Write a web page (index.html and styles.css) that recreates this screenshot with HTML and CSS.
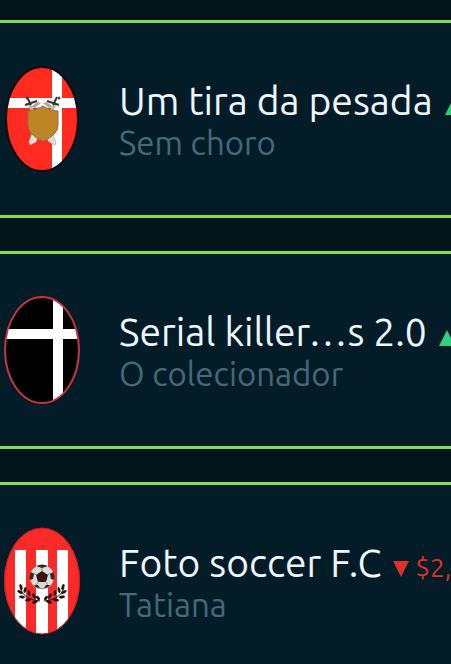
FILE: index.html
```
<!DOCTYPE html>
<html lang="pt-BR">
<head>
<meta charset="utf-8">
<meta name="viewport" content="width=device-width, initial-scale=1">
<title>Times</title>
<link rel="stylesheet" href="styles.css">
</head>
<body>
<main class="teams">
  <article class="team">
    <svg class="crest" viewBox="0 0 78 108" aria-hidden="true">
      <clipPath id="c1"><ellipse cx="39" cy="54" rx="36" ry="52"/></clipPath>
      <g clip-path="url(#c1)">
        <path fill="#ff2a20" d="M0 0h78v108H0z"/>
        <path fill="#fff" d="M0 33h78v10H0zM49 0h10v108H49z"/>
      </g>
      <ellipse cx="39" cy="54" rx="36" ry="52" fill="none" stroke="#100c10" stroke-width="2"/>
      <path d="M25 38L47 75M53 38L31 75" stroke="#b9b9b5" stroke-width="3"/>
      <path d="M43 72l6-4 4 9-1 3-6-3zM35 72l-6-4-3 9 1 3 6-3z" fill="#dededa" stroke="#a8a8a0" stroke-width=".6"/>
      <path d="M24 32l4 8M22 40l12-4M54 32l-4 8M56 40l-12-4" stroke="#34363a" stroke-width="2"/>
      <path d="M28 42l6-5 4 1-6 5zM50 42l-6-5-4 1 6 5z" fill="#aaa9a8"/>
      <circle cx="24" cy="33" r="1.5" fill="#44484c"/><circle cx="56" cy="33" r="1.5" fill="#44484c"/>
      <path d="M25 46q7 0 15-5 7 5 15 5v14q0 10-15 16-15-6-15-16z" fill="#bd8526" stroke="#94733a"/>
    </svg>
    <div class="info">
      <h2 class="name">Um tira da pesada <span class="trend up"><svg class="arrow" viewBox="0 0 16 16" aria-label="Subiu"><path d="M8 0l8 16H0z"/></svg></span></h2>
      <p class="owner">Sem choro</p>
    </div>
  </article>
  <article class="team">
    <svg class="crest" viewBox="0 0 78 108" aria-hidden="true">
      <clipPath id="c2"><ellipse cx="39" cy="54" rx="37" ry="53"/></clipPath>
      <g clip-path="url(#c2)">
        <path d="M0 0h78v108H0z"/>
        <path fill="#fff" d="M0 33h78v10H0zM50 0h10v108H50z"/>
      </g>
      <ellipse cx="39" cy="54" rx="37" ry="53" fill="none" stroke="#c9343b" stroke-width="2"/>
    </svg>
    <div class="info">
      <h2 class="name">Serial killer…s 2.0 <span class="trend up"><svg class="arrow" viewBox="0 0 16 16" aria-label="Subiu"><path d="M8 0l8 16H0z"/></svg></span></h2>
      <p class="owner">O colecionador</p>
    </div>
  </article>
  <article class="team">
    <svg class="crest" viewBox="0 0 78 108" aria-hidden="true">
      <clipPath id="c3"><ellipse cx="39" cy="54" rx="38" ry="53"/></clipPath>
      <g clip-path="url(#c3)">
        <path fill="#fb2a29" d="M0 0h78v108H0z"/>
        <path fill="#fff" d="M12 23h11v85H12zM33 23h12v85H33zM54 23h11v85H54z"/>
      </g>
      <ellipse cx="39" cy="54" rx="37.5" ry="53" fill="none" stroke="#b52224"/>
      <g id="laurel" fill="#201512">
        <path d="M17 61q4 12 20 13" fill="none" stroke="#201512"/>
        <ellipse cx="18" cy="60" rx="1.4" ry="3" transform="rotate(-20 18 60)"/>
        <ellipse cx="17" cy="65" rx="1.5" ry="3" transform="rotate(-60 17 65)"/>
        <ellipse cx="22" cy="63" rx="1.4" ry="3" transform="rotate(15 22 63)"/>
        <ellipse cx="19" cy="70" rx="1.5" ry="3" transform="rotate(-80 19 70)"/>
        <ellipse cx="26" cy="66" rx="1.4" ry="3" transform="rotate(-10 26 66)"/>
        <ellipse cx="25" cy="73" rx="1.5" ry="3" transform="rotate(-100 25 73)"/>
        <ellipse cx="31" cy="69" rx="1.4" ry="3" transform="rotate(-30 31 69)"/>
        <ellipse cx="32" cy="75" rx="1.5" ry="3" transform="rotate(-110 32 75)"/>
        <ellipse cx="35" cy="71" rx="1.4" ry="2.6" transform="rotate(-40 35 71)"/>
      </g>
      <use href="#laurel" transform="translate(78) scale(-1 1)"/>
      <circle cx="39" cy="50" r="12" fill="#d9dcdb"/>
      <path d="M29 57q10 8 20 0-3 5-10 5t-10-5z" fill="#8f9594"/>
      <path d="M39 44l6 4-2 7h-8l-2-7z" fill="#3a1512"/>
      <path d="M39 44v-4M44 48l4-2M42 54l3 4M36 54l-3 4M34 48l-4-2" stroke="#777" stroke-width=".8"/>
      <path d="M33 39q6-3 12 0l-6 2zM28 45l3 2-1 5-3 1q-1-5 1-8zM50 45l-3 2 1 5 3 1q1-5-1-8zM31 58h4l2 3q-4 0-6-3zM47 58h-4l-2 3q4 0 6-3z" fill="#42201c"/>
    </svg>
    <div class="info">
      <h2 class="name">Foto soccer F.C <span class="trend down"><svg class="arrow" viewBox="0 0 16 16" aria-label="Caiu"><path d="M0 0h16L8 16z"/></svg>$2,</span></h2>
      <p class="owner">Tatiana</p>
    </div>
  </article>
</main>
</body>
</html>
```
FILE: styles.css
```
* {
  box-sizing: border-box;
}

body {
  margin: 0;
  background: #03131a;
  font-family: Ubuntu, "Noto Sans", sans-serif;
  overflow: hidden;
}

.teams {
  display: flex;
  flex-direction: column;
  gap: 33px;
  padding-top: 20px;
}

.team {
  display: flex;
  align-items: center;
  gap: 38px;
  padding: 42px 0 42px 3px;
  background: #041c27;
  border-block: 3px solid #80dd5c;
  overflow: hidden;
}

.crest {
  flex: none;
  width: 78px;
  height: 108px;
}

.info {
  flex: 1;
  min-width: 0;
  white-space: nowrap;
}

.name,
.owner {
  margin: 0;
  font-weight: 400;
}

.name {
  color: #edf6fd;
  font-size: 39px;
  line-height: 42px;
}

.owner {
  color: #456979;
  font-size: 33px;
  line-height: 32px;
}

.trend {
  margin-left: 3px;
  font-size: 26px;
}

.arrow {
  width: 16px;
  height: 16px;
  margin-right: 6px;
  fill: currentColor;
}

.up {
  color: #2fd07c;
}

.down {
  color: #dc3127;
}
```
